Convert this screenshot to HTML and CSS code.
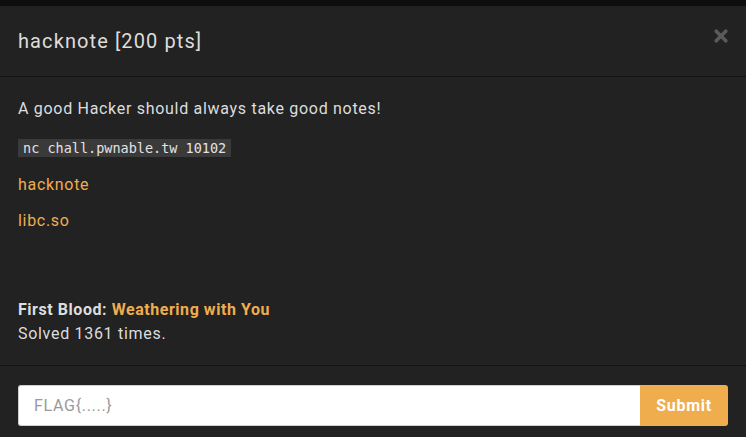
FILE: index.html
```html
<!DOCTYPE html>
<html lang="en">
<head>
<meta charset="utf-8">
<title>hacknote</title>
<link rel="stylesheet" href="styles.css">
</head>
<body>
<div class="modal">
  <div class="modal-header">
    <h4 class="modal-title">hacknote [200 pts]</h4>
    <button class="close" type="button" aria-label="Close">
      <svg width="14" height="14" viewBox="0 0 14 14"><path d="M2.2 2.2 L11.8 11.8 M11.8 2.2 L2.2 11.8" stroke="#5a5a5a" stroke-width="3.6" stroke-linecap="round"/></svg>
    </button>
  </div>
  <div class="modal-body">
    <p class="desc">A good Hacker should always take good notes!</p>
    <p class="cmd"><code>nc chall.pwnable.tw 10102</code></p>
    <p class="file"><a href="#">hacknote</a></p>
    <p class="file"><a href="#">libc.so</a></p>
    <div class="stats">
      <div><strong>First Blood: <a href="#">Weathering with You</a></strong></div>
      <div>Solved 1361 times.</div>
    </div>
  </div>
  <div class="modal-footer">
    <form class="flag-form">
      <input class="flag-input" type="text" placeholder="FLAG{.....}">
      <button class="submit" type="button">Submit</button>
    </form>
  </div>
</div>
</body>
</html>
```

FILE: styles.css
```css
html, body {
  margin: 0;
  padding: 0;
  background: #0e0e0e;
  height: 100%;
  overflow: hidden;
}
body {
  font-family: Roboto, "Liberation Sans", Arial, sans-serif;
  font-size: 16px;
  line-height: 24px;
  letter-spacing: 0.7px;
  color: #dddddd;
}
.modal {
  margin-top: 6px;
  background: #222222;
  min-height: 431px;
}
.modal-header {
  display: flex;
  align-items: center;
  justify-content: space-between;
  padding: 20px 18px;
  border-bottom: 1px solid #141414;
}
.modal-title {
  margin: 0;
  font-size: 20px;
  font-weight: 400;
  line-height: 30px;
  letter-spacing: 1.1px;
  color: #dddddd;
}
.close {
  background: none;
  border: 0;
  padding: 0;
  margin: -10px 0 0 0;
  width: 14px;
  height: 14px;
  display: flex;
}
.modal-body {
  padding: 20px 18px 19px;
  border-bottom: 1px solid #141414;
}
.modal-body p {
  margin: 0;
}
.desc {
  margin-bottom: 15px !important;
}
.cmd {
  margin-bottom: 13px !important;
}
code {
  font-family: "DejaVu Sans Mono", monospace;
  font-size: 13.5px;
  letter-spacing: 0;
  background: #3a3a3a;
  color: #e2e2e2;
  padding: 1px 5px;
}
.file {
  margin-bottom: 12px !important;
}
a {
  color: #f0ad4e;
  text-decoration: none;
}
.stats {
  margin-top: 65px;
}
.stats strong {
  font-weight: 700;
  letter-spacing: 0.55px;
}
.modal-footer {
  padding: 19px 18px 20px;
}
.flag-form {
  display: flex;
}
.flag-input {
  flex: 1;
  height: 41px;
  box-sizing: border-box;
  border: 1px solid #cfcfcf;
  border-right: 0;
  border-radius: 3px 0 0 3px;
  padding: 0 15px;
  font-family: Roboto, "Liberation Sans", Arial, sans-serif;
  font-size: 16px;
  letter-spacing: 0.7px;
  color: #444;
  background: #ffffff;
  outline: none;
}
.flag-input::placeholder {
  color: #999999;
}
.submit {
  width: 88px;
  height: 41px;
  border: 0;
  border-radius: 0 3px 3px 0;
  background: #f0ad4e;
  color: #ffffff;
  font-family: Roboto, "Liberation Sans", Arial, sans-serif;
  font-size: 16px;
  font-weight: 700;
  letter-spacing: 0.7px;
  padding: 0;
}
```
